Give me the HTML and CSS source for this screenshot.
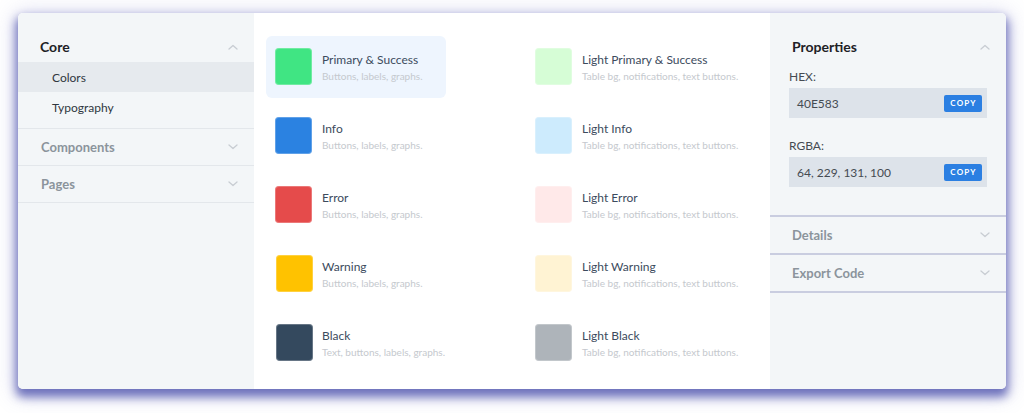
FILE: index.html
```html
<!DOCTYPE html>
<html lang="en">
<head>
<meta charset="utf-8">
<title>Colors</title>
<link rel="stylesheet" href="styles.css">
</head>
<body>
<div class="card">
  <aside class="sidebar">
    <div class="group group-open">
      <div class="group-head head-active">
        <span>Core</span>
        <svg class="chev" width="10" height="6" viewBox="0 0 10 6"><polyline points="1,5 5,1.5 9,5"/></svg>
      </div>
      <div class="sub sub-active">Colors</div>
      <div class="sub">Typography</div>
    </div>
    <div class="group">
      <div class="group-head">
        <span>Components</span>
        <svg class="chev" width="10" height="6" viewBox="0 0 10 6"><polyline points="1,1 5,4.5 9,1"/></svg>
      </div>
    </div>
    <div class="group">
      <div class="group-head">
        <span>Pages</span>
        <svg class="chev" width="10" height="6" viewBox="0 0 10 6"><polyline points="1,1 5,4.5 9,1"/></svg>
      </div>
    </div>
  </aside>

  <main class="palette">
    <div class="swatch-item selected">
      <div class="swatch c-green"></div>
      <div class="info"><div class="title">Primary &amp; Success</div><div class="desc">Buttons, labels, graphs.</div></div>
    </div>
    <div class="swatch-item">
      <div class="swatch c-lgreen"></div>
      <div class="info"><div class="title">Light Primary &amp; Success</div><div class="desc">Table bg, notifications, text buttons.</div></div>
    </div>
    <div class="swatch-item">
      <div class="swatch c-blue"></div>
      <div class="info"><div class="title">Info</div><div class="desc">Buttons, labels, graphs.</div></div>
    </div>
    <div class="swatch-item">
      <div class="swatch c-lblue"></div>
      <div class="info"><div class="title">Light Info</div><div class="desc">Table bg, notifications, text buttons.</div></div>
    </div>
    <div class="swatch-item">
      <div class="swatch c-red"></div>
      <div class="info"><div class="title">Error</div><div class="desc">Buttons, labels, graphs.</div></div>
    </div>
    <div class="swatch-item">
      <div class="swatch c-lred"></div>
      <div class="info"><div class="title">Light Error</div><div class="desc">Table bg, notifications, text buttons.</div></div>
    </div>
    <div class="swatch-item">
      <div class="swatch c-yellow shifted"></div>
      <div class="info"><div class="title">Warning</div><div class="desc">Buttons, labels, graphs.</div></div>
    </div>
    <div class="swatch-item">
      <div class="swatch c-lyellow"></div>
      <div class="info"><div class="title">Light Warning</div><div class="desc">Table bg, notifications, text buttons.</div></div>
    </div>
    <div class="swatch-item">
      <div class="swatch c-black shifted"></div>
      <div class="info"><div class="title">Black</div><div class="desc">Text, buttons, labels, graphs.</div></div>
    </div>
    <div class="swatch-item">
      <div class="swatch c-lblack"></div>
      <div class="info"><div class="title">Light Black</div><div class="desc">Table bg, notifications, text buttons.</div></div>
    </div>
  </main>

  <aside class="panel">
    <div class="pgroup props">
      <div class="phead phead-active">
        <span>Properties</span>
        <svg class="chev" width="10" height="6" viewBox="0 0 10 6"><polyline points="1,5 5,1.5 9,5"/></svg>
      </div>
      <div class="field-label">HEX:</div>
      <div class="field">
        <span>40E583</span>
        <button class="copy">COPY</button>
      </div>
      <div class="field-label second">RGBA:</div>
      <div class="field">
        <span>64, 229, 131, 100</span>
        <button class="copy">COPY</button>
      </div>
    </div>
    <div class="pgroup">
      <div class="phead">
        <span>Details</span>
        <svg class="chev" width="10" height="6" viewBox="0 0 10 6"><polyline points="1,1 5,4.5 9,1"/></svg>
      </div>
    </div>
    <div class="pgroup">
      <div class="phead">
        <span>Export Code</span>
        <svg class="chev" width="10" height="6" viewBox="0 0 10 6"><polyline points="1,1 5,4.5 9,1"/></svg>
      </div>
    </div>
  </aside>
</div>
</body>
</html>
```

FILE: styles.css
```css
* { box-sizing: border-box; }

html, body {
  margin: 0;
  padding: 0;
  background: #ffffff;
}

body {
  min-height: 413px;
  padding: 13px 0 24px 18px;
  font-family: "Lato", "Noto Sans", sans-serif;
  color: #3c4a5b;
}

.card {
  width: 988px;
  height: 376px;
  display: flex;
  border-radius: 5px;
  overflow: hidden;
  background: #ffffff;
  box-shadow: 0 6px 10px 2px rgba(98, 102, 182, 0.9), 0 3px 22px 3px rgba(120, 124, 200, 0.3);
}

/* ---------- left sidebar ---------- */
.sidebar {
  width: 236px;
  flex: none;
  background: #f3f6f8;
  padding-top: 18px;
}

.group {
  border-bottom: 1px solid #e3e7eb;
}

.group-open {
  padding-bottom: 6px;
}

.group-head {
  height: 36px;
  display: flex;
  align-items: center;
  justify-content: space-between;
  padding: 0 16px 0 23px;
  font-size: 13px;
  font-weight: 700;
  color: #8b949c;
}

.group-open .group-head {
  height: 31px;
  padding-left: 22px;
}

.group-head.head-active {
  font-size: 14px;
  color: #1d2126;
}

.chev {
  fill: none;
  stroke: #c8cdd3;
  stroke-width: 1.3;
  stroke-linecap: round;
  stroke-linejoin: round;
}

.sub {
  height: 30px;
  display: flex;
  align-items: center;
  padding-left: 34px;
  font-size: 12px;
  color: #2f3740;
}

.sub-active {
  background: #e6eaee;
}

/* ---------- palette ---------- */
.palette {
  width: 516px;
  flex: none;
  background: #ffffff;
  padding: 23px 12px;
  display: grid;
  grid-template-columns: 180px 180px;
  grid-auto-rows: 62px;
  column-gap: 80px;
  row-gap: 7px;
  align-content: start;
}

.swatch-item {
  display: flex;
  align-items: flex-start;
  padding: 12px 9px 13px;
  border-radius: 6px;
  white-space: nowrap;
}

.swatch-item.selected {
  background: #eef5fe;
}

.swatch {
  width: 37px;
  height: 37px;
  flex: none;
  border-radius: 4px;
  box-shadow: inset 0 0 0 1px rgba(255, 255, 255, 0.25);
}

.swatch.shifted {
  margin-left: 1px;
  margin-right: -1px;
}

.info {
  margin-left: 10px;
  padding-top: 4px;
}

.title {
  font-size: 12px;
  line-height: 16px;
  color: #3c4b5d;
}

.desc {
  margin-top: 1px;
  font-size: 10px;
  line-height: 14px;
  color: #c5c9ce;
}

.c-green   { background: #40e583; }
.c-lgreen  { background: #d6fdd6; }
.c-blue    { background: #2b82e1; }
.c-lblue   { background: #cdebfd; }
.c-red     { background: #e54b4b; }
.c-lred    { background: #ffe9e9; }
.c-yellow  { background: #ffc200; }
.c-lyellow { background: #fff3d3; }
.c-black   { background: #34495e; }
.c-lblack  { background: #aeb4ba; }

/* ---------- right panel ---------- */
.panel {
  width: 236px;
  flex: none;
  background: #f3f6f8;
  padding-top: 18px;
}

.pgroup {
  border-bottom: 2px solid #c9cde0;
}

.props {
  padding: 0 19px 28px;
}

.phead {
  height: 36px;
  display: flex;
  align-items: center;
  justify-content: space-between;
  padding: 0 16px 0 22px;
  font-size: 13px;
  font-weight: 700;
  color: #8b949c;
}

.props .phead.phead-active {
  height: 31px;
  padding: 0 0 0 3px;
  margin-right: -3px;
  font-size: 14px;
  color: #1d2126;
}

.field-label {
  padding: 7px 0 3px;
  font-size: 12px;
  line-height: 16px;
  color: #454b52;
}

.field-label.second {
  padding-top: 20px;
}

.field {
  height: 30px;
  background: #dde3ea;
  display: flex;
  align-items: center;
  justify-content: space-between;
  padding: 0 5px 0 8px;
  font-size: 12px;
  color: #454b52;
}

.copy {
  width: 38px;
  height: 17px;
  border: none;
  border-radius: 2px;
  background: #2b7fe2;
  color: #ffffff;
  font-family: "Lato", "Noto Sans", sans-serif;
  font-size: 8px;
  font-weight: 700;
  letter-spacing: 1.2px;
  padding: 0 0 0 1px;
  cursor: pointer;
}
```
